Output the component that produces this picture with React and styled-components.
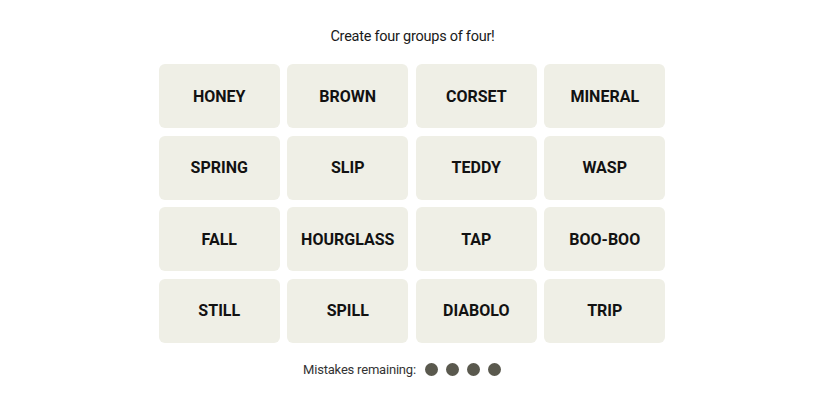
import React from 'react';
import styled, { createGlobalStyle } from 'styled-components';

const GlobalStyle = createGlobalStyle`
    body {
        margin: 0;
        background: #ffffff;
        font-family: 'Roboto', 'Liberation Sans', sans-serif;
        color: #121212;
    }
`;

const Page = styled.div`
    width: 825px;
    height: 413px;
    display: flex;
    flex-direction: column;
    align-items: center;
    padding-top: 26px;
    box-sizing: border-box;
`;

const Prompt = styled.p`
    margin: 0;
    font-size: 14.5px;
    letter-spacing: -0.25px;
    line-height: 22px;
    font-weight: 400;
    color: #1a1a1a;
`;

const Board = styled.div`
    display: grid;
    grid-template-columns: repeat(4, 121px);
    grid-auto-rows: 64px;
    column-gap: 7.5px;
    row-gap: 7.5px;
    margin-top: 16px;
    margin-left: -1px;
`;

const Tile = styled.button`
    border: none;
    border-radius: 6px;
    background: #efefe6;
    color: #121212;
    font-family: 'Roboto', 'Liberation Sans', sans-serif;
    font-weight: 700;
    font-size: 16px;
    text-transform: uppercase;
    cursor: pointer;
    padding: 0;
`;

const Mistakes = styled.div`
    display: flex;
    align-items: center;
    margin-top: 19px;
    padding-right: 21px;
    gap: 9px;
    font-size: 13px;
    letter-spacing: -0.2px;
    color: #333333;
`;

const Dots = styled.div`
    display: flex;
    gap: 8px;
`;

const Dot = styled.span`
    width: 13px;
    height: 13px;
    border-radius: 50%;
    background: #5a594e;
`;

const words = [
    'Honey', 'Brown', 'Corset', 'Mineral',
    'Spring', 'Slip', 'Teddy', 'Wasp',
    'Fall', 'Hourglass', 'Tap', 'Boo-Boo',
    'Still', 'Spill', 'Diabolo', 'Trip'
];

export default function App() {
    return (
        <Page>
            <GlobalStyle />
            <Prompt>Create four groups of four!</Prompt>
            <Board>
                {words.map(w => (
                    <Tile key={w}>{w}</Tile>
                ))}
            </Board>
            <Mistakes>
                Mistakes remaining:
                <Dots>
                    {[0, 1, 2, 3].map(i => (
                        <Dot key={i} />
                    ))}
                </Dots>
            </Mistakes>
        </Page>
    );
}
